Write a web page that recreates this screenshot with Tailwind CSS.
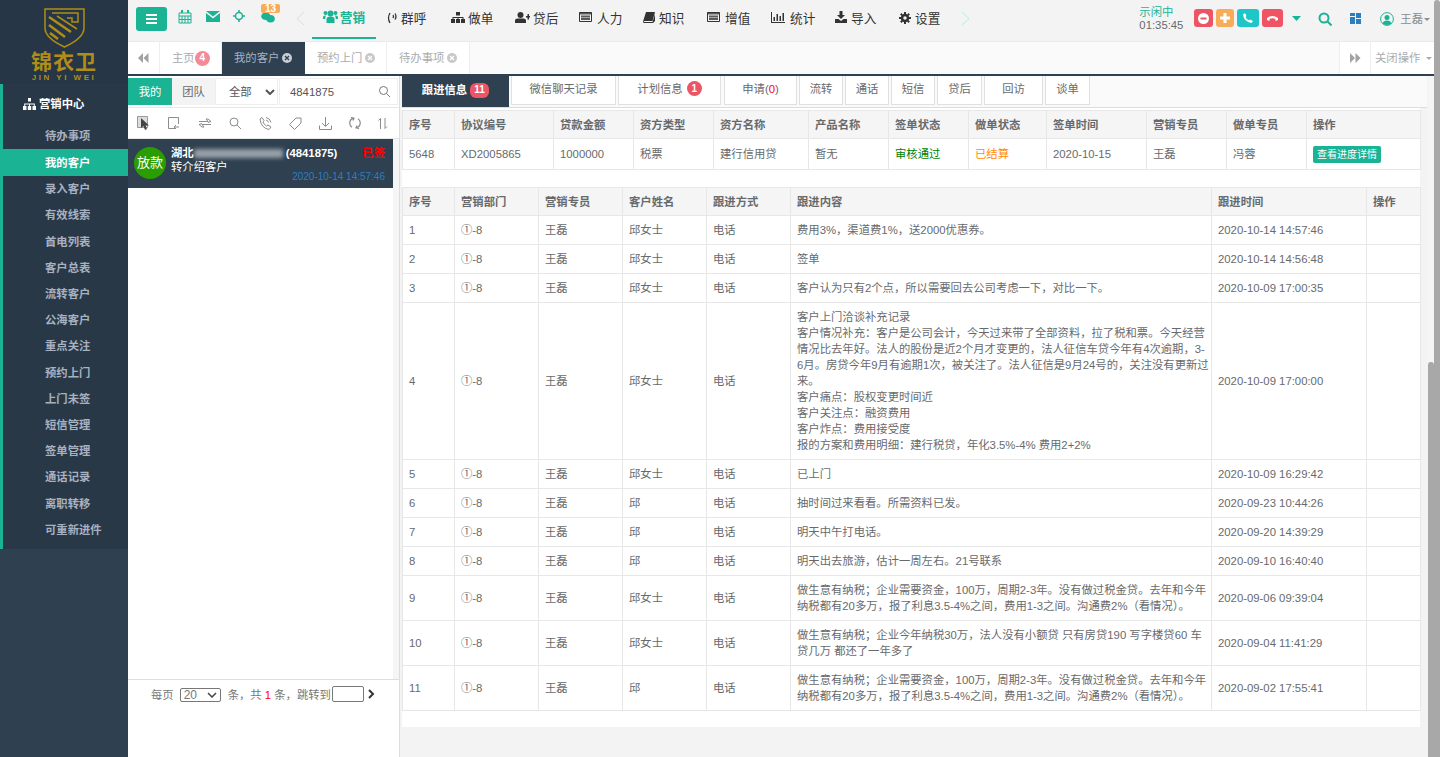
<!DOCTYPE html>
<html>
<head>
  <meta charset="UTF-8">
  <title>锦衣卫</title>
  <script src="https://cdn.jsdelivr.net/npm/@tailwindcss/browser@4"></script>
</head>
<body class="relative flex h-screen overflow-hidden bg-[#f3f3f4] text-[11.33px] leading-[16px] text-[#676a6c] font-['Liberation_Sans','Noto_Sans_CJK_SC',sans-serif]">

  <!-- sidebar -->
  <aside class="w-[128px] shrink-0 bg-[#2f4050]">
    <div class="h-[84px] bg-[#263646] flex flex-col items-center pt-[8px] text-[#b08d16]">
      <svg class="w-[41px] h-[40px]" viewBox="0 0 41 40" fill="none" stroke="#b08d16">
        <path stroke-width="1.5" d="M1 1H40V20Q40 30 20.500 39Q1 30 1 20Z"/>
        <path stroke-width="2.500" d="M5 9L27 24M5 17L21 29M6 25L14 31"/>
        <path stroke-width="1.500" d="M8 5H34V14H28V10H23M13 8L33 21"/>
      </svg>
      <div class="mt-[3px] text-[21px] leading-[22px] font-bold tracking-[1px] whitespace-nowrap">锦衣卫</div>
      <div class="text-[8px] leading-[9px] font-bold tracking-[2.5px] whitespace-nowrap">JIN YI WEI</div>
    </div>
    <div class="h-[465px] bg-[#293846] border-l-[3px] border-[#1ab394] text-[#a7b1c2] font-bold">
      <div class="h-[39px] flex items-center pl-[20px] text-white">
        <svg class="w-[13px] h-[12px] mr-[3px]" viewBox="0 0 13 12" fill="currentColor"><path d="M5 0h3v3.500H5zM0 8h3.500v4H0zM4.800 8h3.400v4H4.800zM9.500 8H13v4H9.500zM1.200 5.500h10.600V8h-1V6.500H7V8H6V6.500H2.200V8h-1z"/></svg>
        营销中心
      </div>
      <a class="flex items-center h-[26.200px] pl-[42px]">待办事项</a>
      <a class="flex items-center h-[27px] -ml-[3px] pl-[45px] bg-[#1ab394] text-white">我的客户</a>
      <a class="flex items-center h-[26.200px] pl-[42px]">录入客户</a>
      <a class="flex items-center h-[26.200px] pl-[42px]">有效线索</a>
      <a class="flex items-center h-[26.200px] pl-[42px]">首电列表</a>
      <a class="flex items-center h-[26.200px] pl-[42px]">客户总表</a>
      <a class="flex items-center h-[26.200px] pl-[42px]">流转客户</a>
      <a class="flex items-center h-[26.200px] pl-[42px]">公海客户</a>
      <a class="flex items-center h-[26.200px] pl-[42px]">重点关注</a>
      <a class="flex items-center h-[26.200px] pl-[42px]">预约上门</a>
      <a class="flex items-center h-[26.200px] pl-[42px]">上门未签</a>
      <a class="flex items-center h-[26.200px] pl-[42px]">短信管理</a>
      <a class="flex items-center h-[26.200px] pl-[42px]">签单管理</a>
      <a class="flex items-center h-[26.200px] pl-[42px]">通话记录</a>
      <a class="flex items-center h-[26.200px] pl-[42px]">离职转移</a>
      <a class="flex items-center h-[26.200px] pl-[42px]">可重新进件</a>
    </div>
  </aside>

  <main class="flex-1 min-w-0 flex flex-col">
    <!-- top nav -->
    <header class="h-[42px] shrink-0 flex items-start border-b border-[#e7eaec] bg-[#f3f3f4]">
      <button class="mt-[7px] ml-[8px] w-[31px] h-[24px] rounded-[3px] bg-[#1ab394] flex items-center justify-center">
        <svg class="w-[11px] h-[10px]" viewBox="0 0 11 10" fill="#fff"><path d="M0 0h11v2H0zM0 4h11v2H0zM0 8h11v2H0z"/></svg>
      </button>
      <div class="relative ml-[11px] mt-[10px] w-[122px] h-[20px] text-[#1ab394] flex items-start">
        <svg class="w-[14px] h-[14px]" viewBox="0 0 14 14" fill="none" stroke="currentColor"><path d="M1 3h12v10H1zM1 6h12M4 6v7M7 6v7M10 6v7M1 9.500h12"/><path stroke-width="2" d="M4 0v3M10 0v3"/></svg>
        <svg class="ml-[14px] mt-[1px] w-[14px] h-[11px]" viewBox="0 0 14 11" fill="currentColor"><path d="M0 0h14L7 5.500zM0 2l7 5.500L14 2v9H0z"/></svg>
        <svg class="ml-[13px] w-[12px] h-[12px]" viewBox="0 0 12 12" fill="none" stroke="currentColor" stroke-width="1.500"><circle cx="6" cy="6" r="3.500"/><path d="M6 0v3M6 9v3M0 6h3M9 6h3"/></svg>
        <svg class="ml-[15px] mt-[2px] w-[16px] h-[11px]" viewBox="0 0 16 13" fill="currentColor"><ellipse cx="5.500" cy="5" rx="5.500" ry="4.500"/><ellipse cx="11" cy="8" rx="5" ry="4.500"/></svg>
        <span class="absolute left-[83px] -top-[6px] w-[19px] h-[9px] rounded-[2px] bg-[#f8ac59] text-white text-[10px] leading-[9px] font-bold text-center">13</span>
      </div>
      <svg class="mt-[11px] -ml-[4px] w-[9px] h-[15px]" viewBox="0 0 9 15" fill="none" stroke="#bfe8df"><path d="M8 1L1 7.500L8 14"/></svg>
      <nav class="ml-[7px] flex items-start text-[12.67px] leading-[20px] text-[#333]">
        <a class="w-[64px] h-[39px] mr-[11px] flex flex-col font-bold text-[#1ab394]">
          <span class="pt-[8px] flex justify-center gap-[2px]">
            <svg class="mt-[2px] w-[15px] h-[13px]" viewBox="0 0 15 13" fill="currentColor"><circle cx="7.500" cy="3.500" r="3"/><circle cx="2.500" cy="3" r="2"/><circle cx="12.500" cy="3" r="2"/><path d="M3.500 13V9q0-2.500 4-2.500t4 2.500v4zM0 9V7q0-1.500 2.500-1.500l.500 0Q2.200 7 2.200 9zM15 9V7q0-1.500-2.500-1.500l-.500 0q.800 1.500.800 3.500z"/></svg>
            营销
          </span>
          <span class="mt-auto h-[2px] bg-[#1ab394]"></span>
        </a>
        <a class="w-[64px] pt-[9px] flex gap-[2px]">
          <svg class="mt-[3px] w-[12px] h-[12px]" viewBox="0 0 12 12" fill="none" stroke="currentColor" stroke-width="1.300"><path d="M3 1Q0 6 3 11M6 3q1 1.500 0 3M8 1.500q2 3 0 6"/></svg>
          群呼
        </a>
        <a class="w-[64px] pt-[9px] flex gap-[3px]">
          <svg class="mt-[3px] w-[14px] h-[11px]" viewBox="0 0 14 11" fill="currentColor"><path d="M5 0h4v3.500H5zM0 7h4v4H0zM5 7h4v4H5zM10 7h4v4h-4zM1.500 5h11v2h-1V6H7.500v1h-1V6H2.500v1h-1z"/></svg>
          做单
        </a>
        <a class="w-[64px] pt-[9px] flex gap-[3px]">
          <svg class="mt-[3px] w-[15px] h-[11px]" viewBox="0 0 15 11" fill="currentColor"><circle cx="5.500" cy="3" r="3"/><path d="M0 11V8.500Q0 6.500 2.500 6.500h6Q11 6.500 11 8.500V11zM11 4h1.500V2H14v2h1v1.500h-1v2h-1.500v-2H11z"/></svg>
          贷后
        </a>
        <a class="w-[64px] pt-[9px] flex gap-[5px]">
          <svg class="mt-[3px] w-[13px] h-[10px]" viewBox="0 0 13 10" fill="none" stroke="currentColor"><path d="M.500.500h12v9H.500z"/><path stroke-width="2" d="M0 1.500h13M2 4.500h9M2 7h9" stroke-opacity=".8"/></svg>
          人力
        </a>
        <a class="w-[64px] pt-[9px] flex gap-[4px]">
          <svg class="mt-[3px] w-[12px] h-[11px]" viewBox="0 0 12 11" fill="currentColor"><path d="M3 0h9L9.500 9H1.500Q.500 9 .800 10H9.500L12 2v7l-2 2H1Q0 11 0 9.500z"/></svg>
          知识
        </a>
        <a class="w-[64px] pt-[9px] flex gap-[5px]">
          <svg class="mt-[3px] w-[13px] h-[10px]" viewBox="0 0 13 10" fill="none" stroke="currentColor"><path d="M.500.500h12v9H.500z"/><path stroke-width="2" d="M0 1.500h13M2 4.500h9M2 7h9" stroke-opacity=".8"/></svg>
          增值
        </a>
        <a class="w-[64px] pt-[9px] flex gap-[5px]">
          <svg class="mt-[3px] w-[14px] h-[11px]" viewBox="0 0 14 11" fill="currentColor"><path d="M0 0h1v10h13v1H0zM2.500 5H4v4H2.500zM5.500 2H7v7H5.500zM8.500 4H10v5H8.500zM11.500 1H13v8h-1.500z"/></svg>
          统计
        </a>
        <a class="w-[64px] pt-[9px] flex gap-[4px]">
          <svg class="mt-[2px] w-[12px] h-[12px]" viewBox="0 0 12 12" fill="currentColor"><path d="M4.500 0h3v4H10L6 8 2 4h2.500zM0 8h3.500L6 10l2.500-2H12v4H0z"/></svg>
          导入
        </a>
        <a class="w-[64px] pt-[9px] flex gap-[4px]">
          <svg class="mt-[3px] w-[12px] h-[12px]" viewBox="0 0 12 12" fill="none" stroke="currentColor"><circle cx="6" cy="6" r="3" stroke-width="2.500"/><path stroke-width="2" d="M6 0v2M6 10v2M0 6h2M10 6h2M1.800 1.800l1.400 1.400M8.800 8.800l1.400 1.400M1.800 10.200l1.400-1.400M8.800 3.200l1.400-1.400"/></svg>
          设置
        </a>
      </nav>
      <svg class="mt-[11px] -ml-[2px] w-[9px] h-[15px]" viewBox="0 0 9 15" fill="none" stroke="#bfe8df"><path d="M1 1L8 7.500L1 14"/></svg>

      <div class="ml-auto mr-[10px] flex items-start">
        <div class="mt-[6px] mr-[11px] w-[44px] leading-[13px]">
          <div class="text-[#1ab394]">示闲中</div>
          <div>01:35:45</div>
        </div>
        <div class="mt-[9px] flex gap-[3px] text-white">
          <span class="w-[19px] h-[18px] rounded-[3px] bg-[#ed5565] flex items-center justify-center"><svg class="w-[11px] h-[11px]" viewBox="0 0 11 11"><circle cx="5.500" cy="5.500" r="5.500" fill="#fff"/><path d="M2.500 4.500h6v2h-6z" fill="#ed5565"/></svg></span>
          <span class="w-[18px] h-[18px] rounded-[3px] bg-[#f8ac59] flex items-center justify-center"><svg class="w-[10px] h-[10px]" viewBox="0 0 10 10" fill="#fff"><path d="M3.500 0h3v3.500H10v3H6.500V10h-3V6.500H0v-3h3.500z"/></svg></span>
          <span class="w-[22px] h-[18px] rounded-[3px] bg-[#1ec6c8] flex items-center justify-center"><svg class="w-[10px] h-[10px]" viewBox="0 0 10 10" fill="#fff"><path d="M0 1.500L2 0l1.500 3-1 1q.800 2 3.500 3.500l1-1L10 8l-1.500 2Q1 9 0 1.500z"/></svg></span>
          <span class="w-[21px] h-[18px] rounded-[3px] bg-[#ed5565] flex items-center justify-center"><svg class="w-[11px] h-[6px]" viewBox="0 0 11 6" fill="#fff"><path d="M0 5V3Q5.500-1 11 3v2L8.500 6V4Q5.500 2.500 2.500 4v2z"/></svg></span>
        </div>
        <svg class="mt-[16px] ml-[9px] w-[9px] h-[5px]" viewBox="0 0 9 5" fill="#1ab394"><path d="M0 0h9L4.500 5z"/></svg>
        <svg class="mt-[12px] ml-[17px] w-[14px] h-[14px]" viewBox="0 0 14 14" fill="none" stroke="#1ab394" stroke-width="2"><circle cx="6" cy="6" r="4.500"/><path d="M9.500 9.500L13.500 13.500"/></svg>
        <svg class="mt-[13px] ml-[18px] w-[11px] h-[11px]" viewBox="0 0 11 11" fill="#2a7fc0"><path d="M0 0h5v3H0zM6 0h5v5H6zM0 4h5v7H0zM6 6h5v5H6z"/></svg>
        <svg class="mt-[12px] ml-[19px] w-[14px] h-[14px]" viewBox="0 0 14 14"><circle cx="7" cy="7" r="6.400" fill="none" stroke="#1ab394"/><circle cx="7" cy="5.500" r="2.500" fill="#1ab394"/><path d="M2.500 11.500Q3.500 8.500 7 8.500t4.500 3Q7 14.500 2.500 11.500z" fill="#1ab394"/></svg>
        <span class="mt-[11px] ml-[6px] text-[#8a8c8e]">王磊</span>
        <svg class="mt-[18px] ml-[1px] w-[6px] h-[3px]" viewBox="0 0 6 3" fill="#8a8c8e"><path d="M0 0h6L3 3z"/></svg>
      </div>
    </header>

    <!-- page tabs -->
    <div class="h-[34px] shrink-0 flex bg-[#fafafa] border-b-2 border-[#2f4050] text-[#a9abad]">
      <div class="w-[32px] flex items-center justify-center border-r border-[#eeeeee] bg-white">
        <svg class="w-[11px] h-[10px]" viewBox="0 0 11 10" fill="#a0a2a4"><path d="M0 5l5-5v10zM5.500 5l5-5v10z"/></svg>
      </div>
      <div class="w-[62px] flex items-center pl-[12px] border-r border-[#eeeeee] bg-white">
        主页<span class="w-[15px] h-[15px] rounded-full bg-[#f48a96] text-white text-[10px] font-bold flex items-center justify-center">4</span>
      </div>
      <div class="w-[83px] flex items-center pl-[12px] bg-[#2f4050] text-[#a7b1c2]">
        我的客户<svg class="ml-[3px] w-[10px] h-[10px]" viewBox="0 0 10 10"><circle cx="5" cy="5" r="5" fill="#c9ced6"/><path d="M3 3l4 4M7 3L3 7" stroke="#2f4050" stroke-width="1.300"/></svg>
      </div>
      <div class="w-[82px] flex items-center pl-[12px] border-r border-[#eeeeee] bg-white">
        预约上门<svg class="ml-[3px] w-[10px] h-[10px]" viewBox="0 0 10 10"><circle cx="5" cy="5" r="5" fill="#c8c8c8"/><path d="M3 3l4 4M7 3L3 7" stroke="#fff" stroke-width="1.300"/></svg>
      </div>
      <div class="w-[83px] flex items-center pl-[12px] border-r border-[#eeeeee] bg-white">
        待办事项<svg class="ml-[3px] w-[10px] h-[10px]" viewBox="0 0 10 10"><circle cx="5" cy="5" r="5" fill="#c8c8c8"/><path d="M3 3l4 4M7 3L3 7" stroke="#fff" stroke-width="1.300"/></svg>
      </div>
      <div class="ml-auto w-[32px] flex items-center justify-center border-x border-[#eeeeee] bg-white">
        <svg class="w-[11px] h-[10px]" viewBox="0 0 11 10" fill="#a0a2a4"><path d="M0 0l5 5-5 5zM5.500 0l5 5-5 5z"/></svg>
      </div>
      <div class="w-[69px] flex items-center pl-[4px] bg-white whitespace-nowrap">
        关闭操作<svg class="ml-[6px] w-[6px] h-[3px]" viewBox="0 0 6 3" fill="#a9abad"><path d="M0 0h6L3 3z"/></svg>
      </div>
    </div>

    <div class="flex-1 min-h-0 flex">
      <!-- customer list pane -->
      <section class="w-[272px] shrink-0 bg-white border-r border-[#dddddd] flex flex-col">
        <div class="mt-[2px] h-[27px] shrink-0 flex items-stretch">
          <span class="w-[44px] bg-[#1ab394] text-white flex items-center justify-center">我的</span>
          <span class="w-[43px] bg-[#f3f3f4] flex items-center justify-center">团队</span>
          <div class="w-[63px] flex items-center pl-[13px] border border-[#eeeeee] text-[#555]">
            全部
            <svg class="ml-[13px] w-[10px] h-[6px]" viewBox="0 0 10 6" fill="none" stroke="#555" stroke-width="2"><path d="M1 1l4 4 4-4"/></svg>
          </div>
          <div class="ml-[1px] w-[119px] flex items-center pl-[10px] border border-[#eeeeee] text-[#555]">
            4841875
            <svg class="ml-auto mr-[7px] w-[11px] h-[11px]" viewBox="0 0 11 11" fill="none" stroke="#777"><circle cx="4.500" cy="4.500" r="4"/><path d="M7.500 7.500L11 11"/></svg>
          </div>
        </div>
        <div class="mt-[2px] h-[32px] shrink-0 flex items-center justify-between pl-[9px] pr-[11px] border-y border-[#e7e7e7] text-[#8a8c8e]">
          <svg class="w-[14px] h-[14px]" viewBox="0 0 14 14"><path d="M.500.500h10v11H.500z" fill="#ddd" stroke="#999"/><path d="M4 2v10l2.500-2 1.500 4 2-1-1.500-3.500H12z" fill="#444"/></svg>
          <svg class="w-[13px] h-[13px]" viewBox="0 0 13 13" fill="none" stroke="currentColor"><path d="M7 11.500H.500V.500h10V7M11 10H6l2-2M6 10l2 2"/></svg>
          <svg class="w-[14px] h-[10px]" viewBox="0 0 14 10" fill="none" stroke="currentColor"><path d="M1 3.500h9l-2-2.500h2l3 2.500-3 1M13 6.500H4l2 2.500H4L1 6.500l3-1"/></svg>
          <svg class="w-[12px] h-[12px]" viewBox="0 0 12 12" fill="none" stroke="currentColor"><circle cx="5" cy="5" r="4"/><path d="M8 8l4 4"/></svg>
          <svg class="w-[13px] h-[13px]" viewBox="0 0 13 13" fill="none" stroke="currentColor"><path d="M1 2l2-1.500 2 3-1 1.500q1 2.500 3.500 4l1.500-1 3 2L10 12.500Q2 11 1 2zM7 .500q4 .5 5 5M7 3q2 .500 2.500 2.500"/></svg>
          <svg class="w-[13px] h-[13px]" viewBox="0 0 13 13" fill="none" stroke="currentColor"><path d="M7 1h5v5l-6.500 6.500-5-5zM9.500 3.500h0" stroke-linejoin="round"/></svg>
          <svg class="w-[13px] h-[13px]" viewBox="0 0 13 13" fill="none" stroke="currentColor"><path d="M6.500 0v9M3 6l3.500 3.500L10 6M.500 8.500v4h12v-4"/></svg>
          <svg class="w-[12px] h-[12px]" viewBox="0 0 12 12" fill="none" stroke="currentColor" stroke-width="1.200"><path d="M4.500 1.200A5 5 0 0 0 3 10.200M7.500 10.800A5 5 0 0 0 9 1.800M2 .500l3 .700-1 2.300M10 11.500l-3-.700 1-2.300"/></svg>
          <svg class="w-[10px] h-[11px]" viewBox="0 0 10 11" fill="none" stroke="currentColor"><path d="M2.500 11V.500L.500 2.500M7 0v10.500l2-2"/></svg>
        </div>
        <div class="flex-1 min-h-0 flex">
          <div class="flex-1 min-w-0">
            <div class="h-[49px] bg-[#2f4050] flex pl-[6px] pt-[8px]">
              <span class="w-[32px] h-[32px] rounded-full bg-[#2a9d00] text-white text-[13px] flex items-center justify-center shrink-0 whitespace-nowrap">放款</span>
              <div class="ml-[5px] flex-1 relative -mt-[2px] text-white">
                <div class="flex items-center font-bold h-[16px]">
                  湖北<span class="w-[89px] h-[9px] mr-[3px] bg-white/50 blur-[2px]"></span>(4841875)
                  <span class="ml-auto mr-[8px] text-[#ff0000]">已签</span>
                </div>
                <div class="-mt-[2px]">转介绍客户</div>
                <div class="absolute right-[8px] top-[24px] text-[#2a7fc0] text-[10px] leading-[16px]">2020-10-14 14:57:46</div>
              </div>
            </div>
          </div>
          <div class="w-[6px] bg-[#f5f5f5]"></div>
        </div>
        <div class="h-[78px] shrink-0 border-t border-[#dddddd] pt-[6px] pl-[23px] flex items-start text-[#777] whitespace-nowrap">
          <span class="mt-[1px]">每页</span>
          <div class="ml-[6px] w-[41px] h-[14px] mt-[2px] border border-[#777] rounded-[2px] flex items-center pl-[3px] text-[12px] leading-[12px]">
            20<svg class="ml-auto mr-[3px] w-[10px] h-[6px]" viewBox="0 0 10 6" fill="none" stroke="#444" stroke-width="1.500"><path d="M1 1l4 4 4-4"/></svg>
          </div>
          <span class="mt-[1px] ml-[7px]">条，共 <span class="text-[#ff0000]">1</span> 条，跳转到</span>
          <span class="ml-[1px] w-[32px] h-[16px] border border-[#777] rounded-[2px]"></span>
          <svg class="ml-[3px] mt-[3px] w-[8px] h-[10px]" viewBox="0 0 8 10" fill="none" stroke="#333" stroke-width="2"><path d="M2 1l4 4-4 4"/></svg>
        </div>
      </section>

      <!-- detail pane -->
      <section class="flex-1 min-w-0 pl-[2px]">
        <div class="mr-[13px] h-[32px] flex items-stretch bg-[#fafafa] border-b border-[#dddddd] whitespace-nowrap">
          <div class="w-[107px] pb-[3px] bg-[#2f4050] text-white font-bold flex items-center justify-center gap-[3px]">跟进信息<span class="w-[19px] h-[15px] rounded-[6px] bg-[#ed5565] text-[10px] flex items-center justify-center">11</span></div>
          <div class="ml-[2px] w-[105px] mb-[2px] pb-[3px] bg-white border-x border-b border-[#e0e0e0] flex items-center justify-center">微信聊天记录</div>
          <div class="ml-[2px] w-[103px] mb-[2px] pb-[3px] bg-white border-x border-b border-[#e0e0e0] flex items-center justify-center gap-[4px]">计划信息<span class="w-[15px] h-[15px] rounded-full bg-[#ed5565] text-white text-[10px] font-bold flex items-center justify-center">1</span></div>
          <div class="ml-[3px] w-[73px] mb-[2px] pb-[3px] bg-white border-x border-b border-[#e0e0e0] flex items-center justify-center">申请(<span class="text-[#ff0000]">0</span>)</div>
          <div class="ml-[2px] w-[44px] mb-[2px] pb-[3px] bg-white border-x border-b border-[#e0e0e0] flex items-center justify-center">流转</div>
          <div class="ml-[2px] w-[44px] mb-[2px] pb-[3px] bg-white border-x border-b border-[#e0e0e0] flex items-center justify-center">通话</div>
          <div class="ml-[2px] w-[44px] mb-[2px] pb-[3px] bg-white border-x border-b border-[#e0e0e0] flex items-center justify-center">短信</div>
          <div class="ml-[2px] w-[45px] mb-[2px] pb-[3px] bg-white border-x border-b border-[#e0e0e0] flex items-center justify-center">贷后</div>
          <div class="ml-[2px] w-[59px] mb-[2px] pb-[3px] bg-white border-x border-b border-[#e0e0e0] flex items-center justify-center">回访</div>
          <div class="ml-[2px] w-[45px] mb-[2px] pb-[3px] bg-white border-x border-b border-[#e0e0e0] flex items-center justify-center">谈单</div>
        </div>

        <div class="w-[1018px] h-[619px] pt-[2px] bg-white">
          <table class="w-[1018px] table-fixed border-collapse [&_td]:border [&_td]:border-[#e7e7e7] [&_td]:px-[6px] [&_td]:py-[6px] [&_th]:border [&_th]:border-[#e7e7e7] [&_th]:bg-[#f5f5f6] [&_th]:px-[6px] [&_th]:py-[5px] [&_th]:text-left [&_th]:font-bold [&_th]:h-[28px]">
            <thead>
              <tr>
                <th class="w-[52px]">序号</th><th class="w-[99px]">协议编号</th><th class="w-[80px]">贷款金额</th><th class="w-[80px]">资方类型</th><th class="w-[95px]">资方名称</th><th class="w-[80px]">产品名称</th><th class="w-[80px]">签单状态</th><th class="w-[78px]">做单状态</th><th class="w-[100px]">签单时间</th><th class="w-[80px]">营销专员</th><th class="w-[80px]">做单专员</th><th class="w-[114px]">操作</th>
              </tr>
            </thead>
            <tbody>
              <tr class="h-[31px]">
                <td>5648</td><td>XD2005865</td><td>1000000</td><td>税票</td><td>建行信用贷</td><td>暂无</td><td class="text-[#008000]">审核通过</td><td class="text-[#ff8c00]">已结算</td><td>2020-10-15</td><td>王磊</td><td>冯蓉</td>
                <td class="!py-0"><span class="block w-[68px] h-[17px] rounded-[2px] bg-[#1ab394] text-white text-[10px] leading-[17px] text-center whitespace-nowrap">查看进度详情</span></td>
              </tr>
            </tbody>
          </table>

          <table class="mt-[17px] w-[1018px] table-fixed border-collapse [&_td]:border [&_td]:border-[#e7e7e7] [&_td]:px-[6px] [&_td]:py-[6px] [&_th]:border [&_th]:border-[#e7e7e7] [&_th]:bg-[#f5f5f6] [&_th]:px-[6px] [&_th]:py-[5px] [&_th]:text-left [&_th]:font-bold [&_th]:h-[28px]">
            <thead>
              <tr>
                <th class="w-[52px]">序号</th><th class="w-[84px]">营销部门</th><th class="w-[84px]">营销专员</th><th class="w-[84px]">客户姓名</th><th class="w-[84px]">跟进方式</th><th class="w-[421px]">跟进内容</th><th class="w-[155px]">跟进时间</th><th class="w-[54px]">操作</th>
              </tr>
            </thead>
            <tbody>
              <tr><td>1</td><td>①-8</td><td>王磊</td><td>邱女士</td><td>电话</td><td>费用3%，渠道费1%，送2000优惠券。</td><td>2020-10-14 14:57:46</td><td></td></tr>
              <tr><td>2</td><td>①-8</td><td>王磊</td><td>邱女士</td><td>电话</td><td>签单</td><td>2020-10-14 14:56:48</td><td></td></tr>
              <tr><td>3</td><td>①-8</td><td>王磊</td><td>邱女士</td><td>电话</td><td>客户认为只有2个点，所以需要回去公司考虑一下，对比一下。</td><td>2020-10-09 17:00:35</td><td></td></tr>
              <tr><td>4</td><td>①-8</td><td>王磊</td><td>邱女士</td><td>电话</td><td class="whitespace-nowrap">客户上门洽谈补充记录<br>客户情况补充：客户是公司会计，今天过来带了全部资料，拉了税和票。今天经营<br>情况比去年好。法人的股份是近2个月才变更的，法人征信车贷今年有4次逾期，3-<br>6月。房贷今年9月有逾期1次，被关注了。法人征信是9月24号的，关注没有更新过<br>来。<br>客户痛点：股权变更时间近<br>客户关注点：融资费用<br>客户炸点：费用接受度<br>报的方案和费用明细：建行税贷，年化3.5%-4% 费用2+2%</td><td>2020-10-09 17:00:00</td><td></td></tr>
              <tr><td>5</td><td>①-8</td><td>王磊</td><td>邱女士</td><td>电话</td><td>已上门</td><td>2020-10-09 16:29:42</td><td></td></tr>
              <tr><td>6</td><td>①-8</td><td>王磊</td><td>邱</td><td>电话</td><td>抽时间过来看看。所需资料已发。</td><td>2020-09-23 10:44:26</td><td></td></tr>
              <tr><td>7</td><td>①-8</td><td>王磊</td><td>邱</td><td>电话</td><td>明天中午打电话。</td><td>2020-09-20 14:39:29</td><td></td></tr>
              <tr><td>8</td><td>①-8</td><td>王磊</td><td>邱</td><td>电话</td><td>明天出去旅游，估计一周左右。21号联系</td><td>2020-09-10 16:40:40</td><td></td></tr>
              <tr><td>9</td><td>①-8</td><td>王磊</td><td>邱女士</td><td>电话</td><td class="whitespace-nowrap">做生意有纳税；企业需要资金，100万，周期2-3年。没有做过税金贷。去年和今年<br>纳税都有20多万，报了利息3.5-4%之间，费用1-3之间。沟通费2%（看情况）。</td><td>2020-09-06 09:39:04</td><td></td></tr>
              <tr><td>10</td><td>①-8</td><td>王磊</td><td>邱女士</td><td>电话</td><td class="whitespace-nowrap">做生意有纳税；企业今年纳税30万，法人没有小额贷 只有房贷190 写字楼贷60 车<br>贷几万 都还了一年多了</td><td>2020-09-04 11:41:29</td><td></td></tr>
              <tr><td>11</td><td>①-8</td><td>王磊</td><td>邱</td><td>电话</td><td class="whitespace-nowrap">做生意有纳税；企业需要资金，100万，周期2-3年。没有做过税金贷。去年和今年<br>纳税都有20多万，报了利息3.5-4%之间，费用1-3之间。沟通费2%（看情况）。</td><td>2020-09-02 17:55:41</td><td></td></tr>
            </tbody>
          </table>
        </div>
      </section>
    </div>
  </main>

  <!-- scrollbars -->
  <div class="absolute right-[6px] top-[76px] bottom-0 w-[6px] bg-[#f5f5f5]"></div>
  <div class="absolute right-[6px] top-[362px] bottom-0 w-[6px] bg-[#a8a8a8] rounded-t-[3px]"></div>
  <div class="absolute right-0 top-0 bottom-0 w-[6px] bg-[#a8a8a8] rounded-t-[3px]"></div>
</body>
</html>
